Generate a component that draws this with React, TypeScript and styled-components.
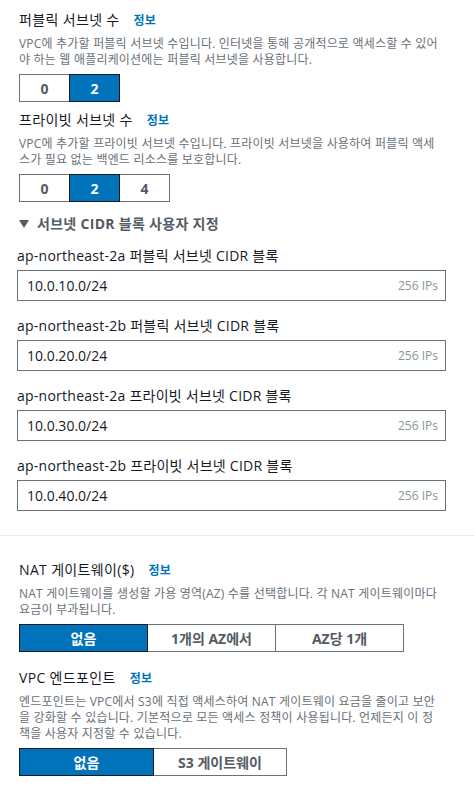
import React from "react";
import styled, { createGlobalStyle } from "styled-components";

const Global = createGlobalStyle`
  html, body { margin: 0; padding: 0; background: #ffffff; }
  body {
    font-family: "Open Sans", "Noto Sans CJK KR", sans-serif;
    color: #16191f;
    width: 474px;
  }
  * { box-sizing: border-box; }
`;

const Page = styled.div`
  display: flex;
  flex-direction: column;
  padding-top: 10px;
`;

const Section = styled.section<{ $pl?: number }>`
  display: flex;
  flex-direction: column;
  padding-left: ${(p) => p.$pl ?? 19}px;
  padding-right: 8px;
`;

const Field = styled.div<{ $mb?: number }>`
  display: flex;
  flex-direction: column;
  margin-bottom: ${(p) => p.$mb ?? 0}px;
`;

const TitleRow = styled.div`
  display: flex;
  align-items: baseline;
  gap: 14px;
  font-size: 14px;
  line-height: 20px;
  letter-spacing: 0.35px;
  color: #16191f;
`;

const InfoLink = styled.span`
  font-size: 12px;
  font-weight: 700;
  letter-spacing: 0.2px;
  color: #0073bb;
`;

const Desc = styled.p`
  margin: 5px 0 6px;
  font-size: 12px;
  line-height: 16px;
  letter-spacing: 0.2px;
  color: #687078;
`;

const Segmented = styled.div`
  display: flex;
`;

const SegButton = styled.button<{ $w: number; $selected?: boolean }>`
  width: ${(p) => p.$w}px;
  height: 28px;
  margin-left: -1px;
  &:first-child { margin-left: 0; }
  border: 1px solid ${(p) => (p.$selected ? "#16191f" : "#687078")};
  background: ${(p) => (p.$selected ? "#0073bb" : "#ffffff")};
  color: ${(p) => (p.$selected ? "#ffffff" : "#545b64")};
  font-family: "Open Sans", "Noto Sans CJK KR", sans-serif;
  font-size: 14px;
  font-weight: 700;
  padding: 0;
  position: relative;
  z-index: ${(p) => (p.$selected ? 1 : 0)};
`;

const Expander = styled.div`
  display: flex;
  align-items: center;
  gap: 8px;
  margin: 12px 0 12px 0;
  font-size: 14px;
  font-weight: 700;
  line-height: 20px;
  letter-spacing: 0.3px;
  color: #545b64;
`;

const Caret = styled.span`
  display: inline-block;
  width: 0;
  height: 0;
  border-left: 5px solid transparent;
  border-right: 5px solid transparent;
  border-top: 8px solid #545b64;
`;

const CidrList = styled.div`
  display: flex;
  flex-direction: column;
  gap: 15px;
`;

const CidrField = styled.div`
  display: flex;
  flex-direction: column;
  gap: 4px;
`;

const Label = styled.label`
  font-size: 14px;
  line-height: 20px;
  letter-spacing: 0.25px;
  color: #16191f;
`;

const InputBox = styled.div`
  width: 429px;
  height: 31px;
  border: 1px solid #687078;
  display: flex;
  align-items: center;
  justify-content: space-between;
  padding: 0 7px 0 9px;
`;

const InputText = styled.span`
  font-size: 14px;
  color: #16191f;
`;

const Suffix = styled.span`
  font-size: 12px;
  color: #879596;
`;

const Divider = styled.hr`
  width: 100%;
  border: 0;
  border-top: 1px solid #eaeded;
  margin: 24px 0 24px;
`;

const cidrs = [
  ["ap-northeast-2a 퍼블릭 서브넷 CIDR 블록", "10.0.10.0/24"],
  ["ap-northeast-2b 퍼블릭 서브넷 CIDR 블록", "10.0.20.0/24"],
  ["ap-northeast-2a 프라이빗 서브넷 CIDR 블록", "10.0.30.0/24"],
  ["ap-northeast-2b 프라이빗 서브넷 CIDR 블록", "10.0.40.0/24"],
];

export default function App() {
  return (
    <>
      <Global />
      <Page>
        <Section>
          <Field $mb={8}>
            <TitleRow>
              퍼블릭 서브넷 수<InfoLink>정보</InfoLink>
            </TitleRow>
            <Desc>
              VPC에 추가할 퍼블릭 서브넷 수입니다. 인터넷을 통해 공개적으로 액세스할 수 있어
              <br />야 하는 웹 애플리케이션에는 퍼블릭 서브넷을 사용합니다.
            </Desc>
            <Segmented>
              <SegButton $w={51}>0</SegButton>
              <SegButton $w={51} $selected>2</SegButton>
            </Segmented>
          </Field>
          <Field>
            <TitleRow>
              프라이빗 서브넷 수<InfoLink>정보</InfoLink>
            </TitleRow>
            <Desc>
              VPC에 추가할 프라이빗 서브넷 수입니다. 프라이빗 서브넷을 사용하여 퍼블릭 액세
              <br />스가 필요 없는 백엔드 리소스를 보호합니다.
            </Desc>
            <Segmented>
              <SegButton $w={51}>0</SegButton>
              <SegButton $w={51} $selected>2</SegButton>
              <SegButton $w={51}>4</SegButton>
            </Segmented>
          </Field>
          <Expander>
            <Caret />
            서브넷 CIDR 블록 사용자 지정
          </Expander>
        </Section>
        <Section $pl={17}>
          <CidrList>
            {cidrs.map(([label, value]) => (
              <CidrField key={label}>
                <Label>{label}</Label>
                <InputBox>
                  <InputText>{value}</InputText>
                  <Suffix>256 IPs</Suffix>
                </InputBox>
              </CidrField>
            ))}
          </CidrList>
        </Section>
        <Divider />
        <Section>
          <Field $mb={16}>
            <TitleRow>
              NAT 게이트웨이($)<InfoLink>정보</InfoLink>
            </TitleRow>
            <Desc>
              NAT 게이트웨이를 생성할 가용 영역(AZ) 수를 선택합니다. 각 NAT 게이트웨이마다
              <br />요금이 부과됩니다.
            </Desc>
            <Segmented>
              <SegButton $w={129} $selected>없음</SegButton>
              <SegButton $w={129}>1개의 AZ에서</SegButton>
              <SegButton $w={129}>AZ당 1개</SegButton>
            </Segmented>
          </Field>
          <Field>
            <TitleRow>
              VPC 엔드포인트<InfoLink>정보</InfoLink>
            </TitleRow>
            <Desc>
              엔드포인트는 VPC에서 S3에 직접 액세스하여 NAT 게이트웨이 요금을 줄이고 보안
              <br />을 강화할 수 있습니다. 기본적으로 모든 액세스 정책이 사용됩니다. 언제든지 이 정
              <br />책을 사용자 지정할 수 있습니다.
            </Desc>
            <Segmented>
              <SegButton $w={135} $selected>없음</SegButton>
              <SegButton $w={134}>S3 게이트웨이</SegButton>
            </Segmented>
          </Field>
        </Section>
      </Page>
    </>
  );
}
